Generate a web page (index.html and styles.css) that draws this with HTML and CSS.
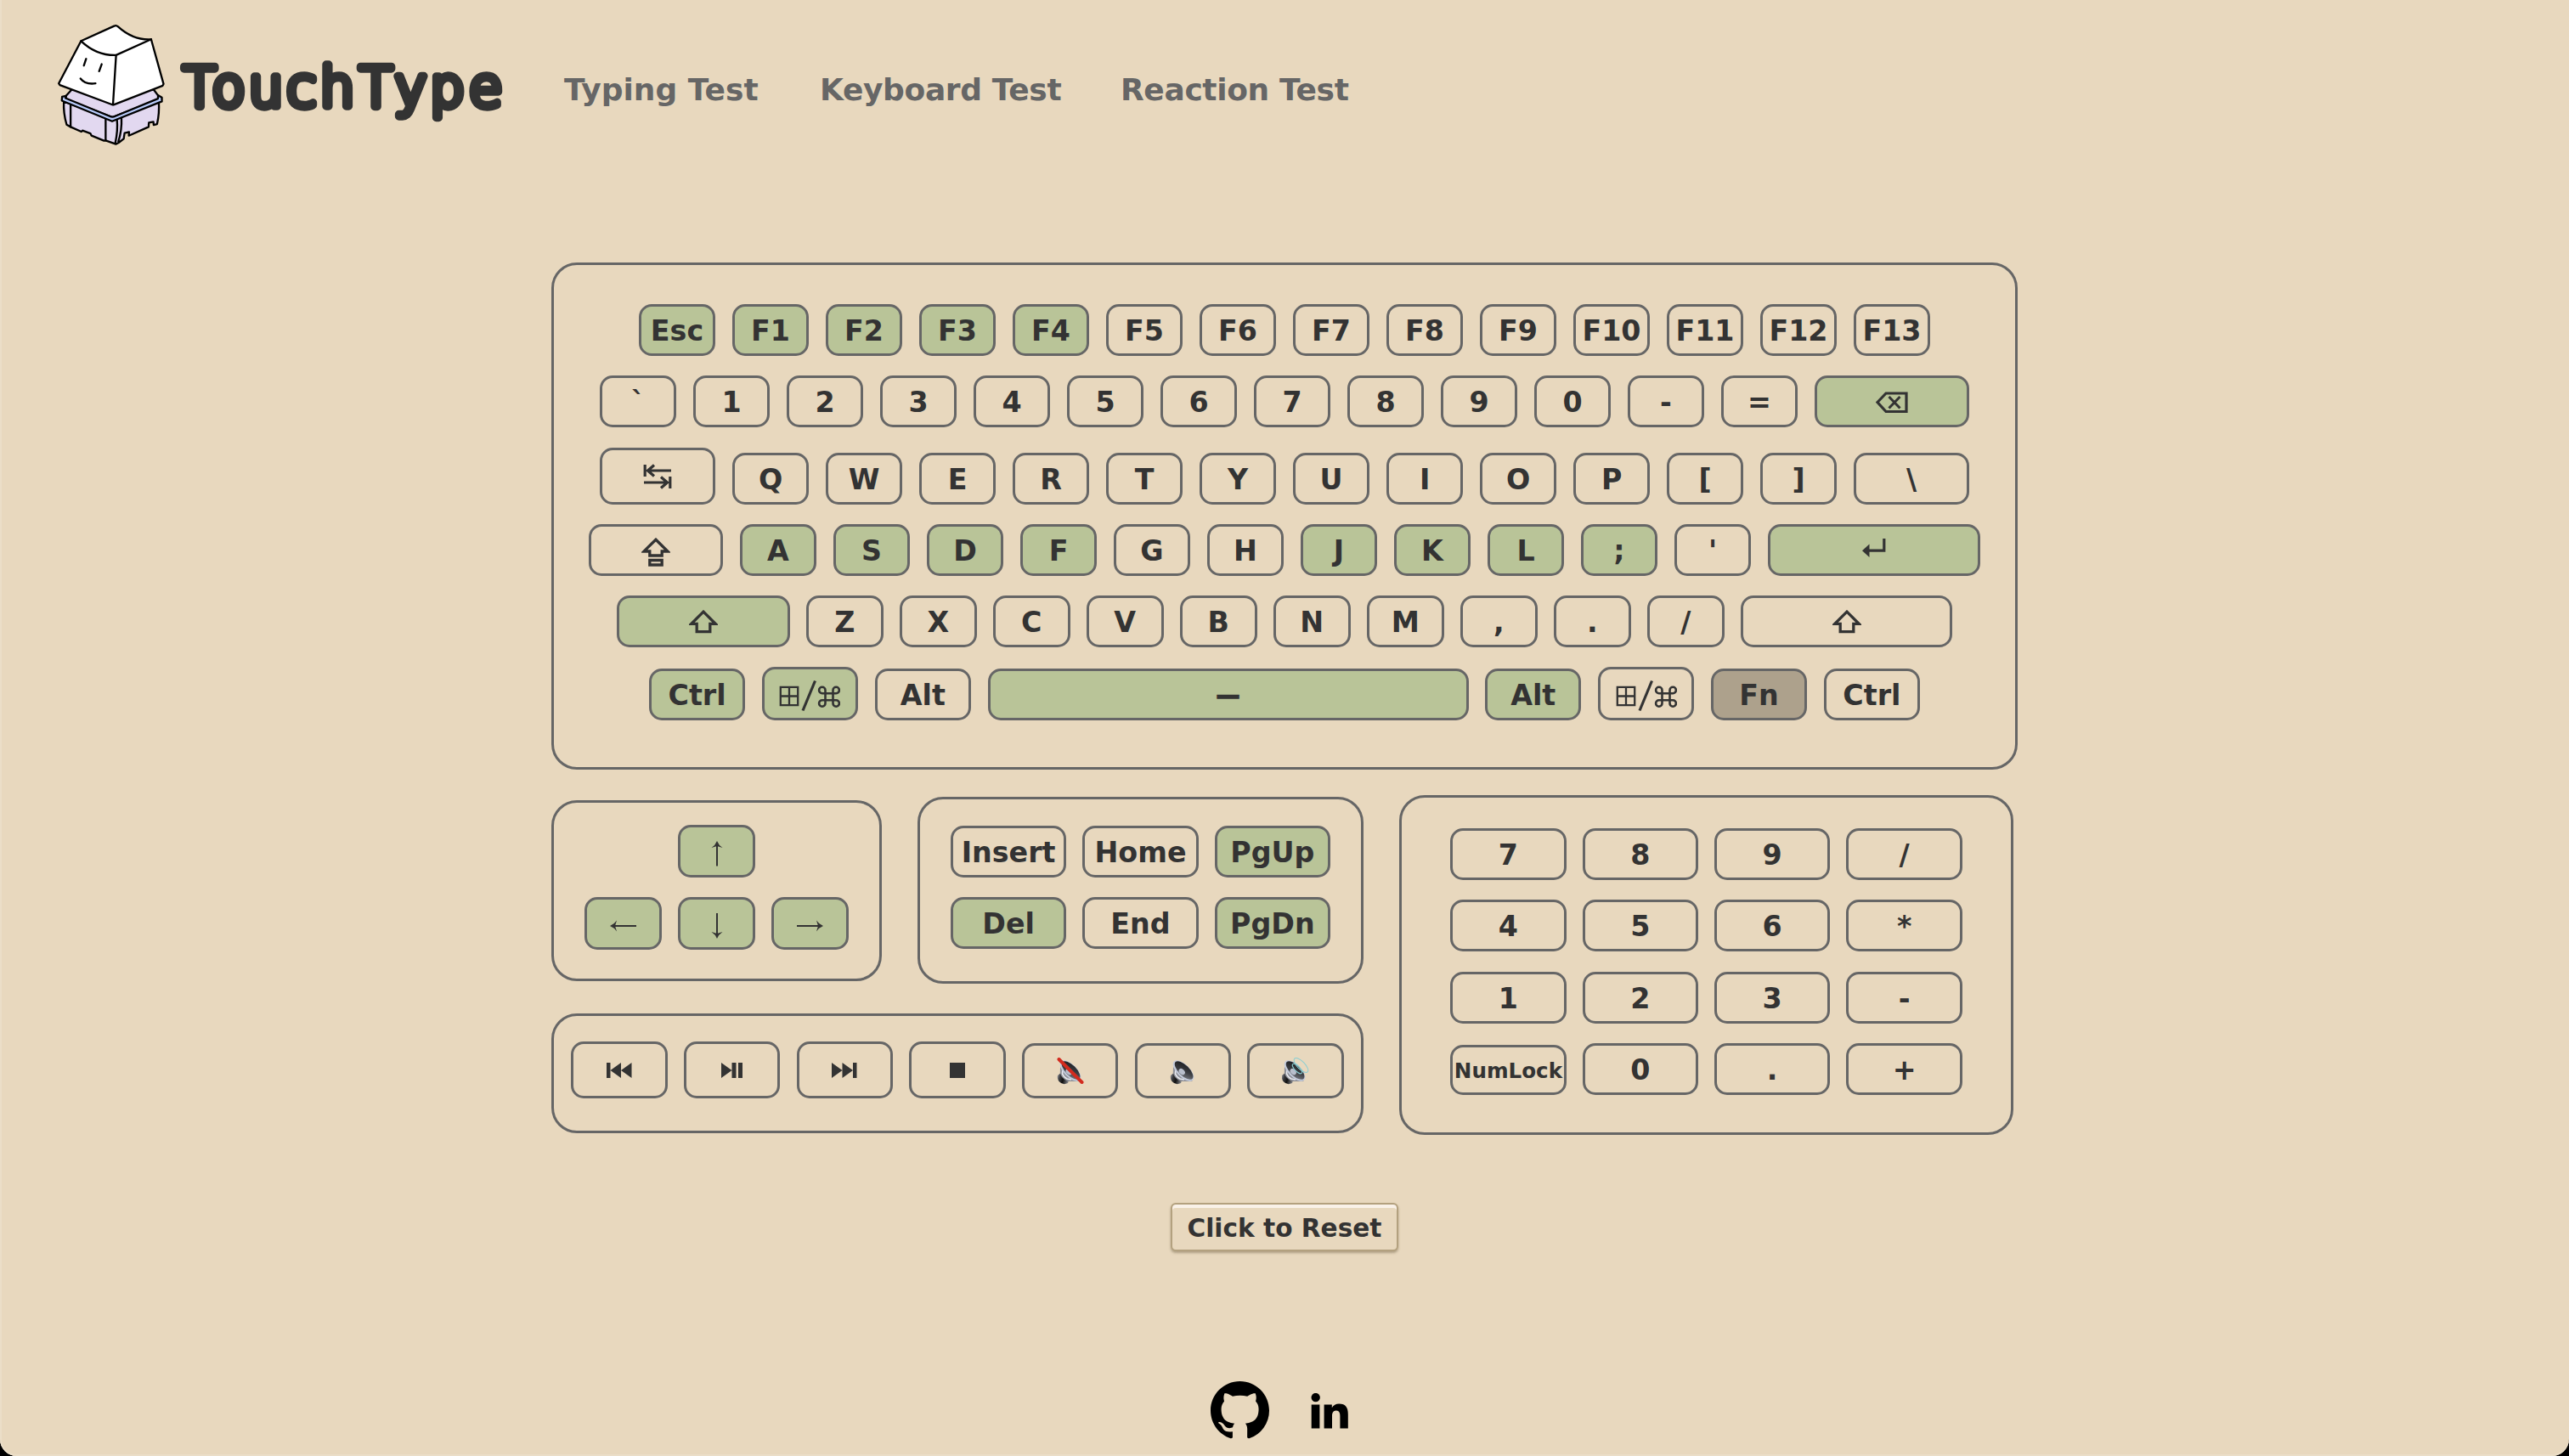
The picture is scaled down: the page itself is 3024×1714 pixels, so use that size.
FILE: index.html
```
<!DOCTYPE html>
<html lang="en">
<head>
<meta charset="utf-8">
<title>TouchType - Keyboard Test</title>
<link rel="stylesheet" href="styles.css">
</head>
<body>
<svg class="defs" width="0" height="0" aria-hidden="true">
  <defs>
    <linearGradient id="cone" x1="0" y1="0" x2="1" y2="1">
      <stop offset="0" stop-color="#17181b"/><stop offset=".55" stop-color="#3b3d42"/><stop offset="1" stop-color="#84868c"/>
    </linearGradient>
    <linearGradient id="magnet" x1="0" y1="0" x2="1" y2=".3">
      <stop offset="0" stop-color="#b9bac0"/><stop offset=".3" stop-color="#3a3b3f"/><stop offset=".6" stop-color="#111"/><stop offset="1" stop-color="#77797e"/>
    </linearGradient>
    <symbol id="shift" viewBox="0 0 34 28">
      <path d="M17 2.2 L31.2 16.3 H24.8 V25.6 H9.2 V16.3 H2.8 Z" fill="none" stroke="currentColor" stroke-width="3.3"/>
    </symbol>
    <symbol id="wincmd" viewBox="0 0 72 38">
      <path d="M1.8 8.8 H22.2 V30.2 H1.8 Z M12 8.8 V30.2 M1.8 19.5 H22.2" fill="none" stroke="currentColor" stroke-width="2.3"/>
      <path d="M28 36.5 L42.5 1.5" stroke="currentColor" stroke-width="3.2"/>
      <path d="M54.5 16 V12.5 A3.7 3.7 0 1 0 50.8 16.2 H67.2 A3.7 3.7 0 1 0 63.5 12.5 V28 A3.7 3.7 0 1 0 67.2 24.3 H50.8 A3.7 3.7 0 1 0 54.5 28 Z" fill="none" stroke="currentColor" stroke-width="2.6"/>
    </symbol>
    <symbol id="speaker" viewBox="0 0 30 30">
      <path d="M1 19 L6.5 14.5 L15 22 L13 28 Q7 31 2.5 26 Q0 22 1 19Z" fill="url(#magnet)"/>
      <path d="M4 9 L3.8 16 Q6 24 14 26 L27 26 Z" fill="#8d8f96"/>
      <path d="M7 12 L6.5 17 Q8 21 12 23 L17 24" fill="none" stroke="#e8e9ee" stroke-width="1.6"/>
      <ellipse cx="16" cy="13.5" rx="15.6" ry="7.6" transform="rotate(45 16 13.5)" fill="#c4cbdb"/>
      <ellipse cx="16.6" cy="13" rx="14" ry="6.2" transform="rotate(45 16.6 13)" fill="url(#cone)"/>
      <ellipse cx="14.2" cy="14.6" rx="4.2" ry="3" transform="rotate(45 14.2 14.6)" fill="#b9bfcc"/>
    </symbol>
  </defs>
</svg>
<header class="header">
  <a class="brand">
    <svg class="mascot" viewBox="50 20 384 436" fill="none" stroke="#000" stroke-width="7" stroke-linejoin="round" stroke-linecap="round">
      <path d="M74 298 Q72 340 84 380 L98 388 L136 405 L140 401 L168 411 L172 419 L216 437 L222 436 L258 449 L268 444 L286 430 L289 410 L305 406 L304 419 L374 388 L375 373 L391 370 L392 381 L404 378 Q413 340 410 298 L245 360 Z" fill="#e2d8f0"/>
      <path d="M98 308 V388 M222 360 V436 M262 362 Q266 400 256 446 M278 358 Q280 400 267 440" />
      <path d="M102 256 L82 278 L80 290 L246 354 L410 290 L407 276 L392 256 Z" fill="#e2d8f0" />
      <path d="M82 278 L68 281 L67 295 L245 368 L421 298 V284 L408 276 L407 288 L256 350 Q246 355 236 350 L80 286 Z" fill="#b9ccfb"/>
      <path d="M135 84 L252 31 Q259 27 266 33 Q320 82 383 78 L427 236 L424 242 L252 309 Q247 311 242 308 L60 240 L56 234 Z" fill="#fff"/>
      <path d="M135 84 Q190 136 259 134 L383 78 M259 134 L248 309"/>
      <path d="M153 147 L145 171 M208 166 L199 191 M133 217 Q150 239 186 234"/>
    </svg>
    <svg class="wordmark" viewBox="205 60 395 96" aria-label="TouchType">
      <text y="125.3" x="215.2 249.6 292.7 337.2 376.7 423 464.4 506.3 551.9">TouchType</text>
    </svg>
  </a>
  <nav class="nav">
    <a class="nav-link typing">Typing Test</a>
    <a class="nav-link keyboard-link">Keyboard Test</a>
    <a class="nav-link reaction">Reaction Test</a>
  </nav>
</header>

<main class="main">
  <section class="panel board">
    <div class="row">
      <div class="key on">Esc</div><div class="key on">F1</div><div class="key on">F2</div><div class="key on">F3</div><div class="key on">F4</div><div class="key">F5</div><div class="key">F6</div><div class="key">F7</div><div class="key">F8</div><div class="key">F9</div><div class="key">F10</div><div class="key">F11</div><div class="key">F12</div><div class="key">F13</div>
    </div>
    <div class="row">
      <div class="key">`</div><div class="key">1</div><div class="key">2</div><div class="key">3</div><div class="key">4</div><div class="key">5</div><div class="key">6</div><div class="key">7</div><div class="key">8</div><div class="key">9</div><div class="key">0</div><div class="key">-</div><div class="key">=</div>
      <div class="key backspace on"><svg width="38" height="26" viewBox="0 0 38 26" fill="none" stroke="currentColor"><path d="M2 12.5 L12 2 H36 V23.5 H12 Z" stroke-width="3.2"/><path d="M15.5 6 L28.5 19.5 M28.5 6 L15.5 19.5" stroke-width="3"/></svg></div>
    </div>
    <div class="row">
      <div class="key tab"><svg width="34" height="30" viewBox="0 0 34 30" fill="none" stroke="currentColor" stroke-width="3.2"><path d="M2.2 1 V15 M33 8 H5 M13 1.5 L5.5 8 L13 14.5 M31.8 15 V29 M1 22 H29 M21 15.5 L28.5 22 L21 28.5"/></svg></div>
      <div class="key">Q</div><div class="key">W</div><div class="key">E</div><div class="key">R</div><div class="key">T</div><div class="key">Y</div><div class="key">U</div><div class="key">I</div><div class="key">O</div><div class="key">P</div><div class="key">[</div><div class="key">]</div>
      <div class="key wide">\</div>
    </div>
    <div class="row">
      <div class="key caps"><svg width="34" height="34" viewBox="0 0 34 34" fill="none" stroke="currentColor" stroke-width="3.3"><path d="M17 2.2 L31 16 H24.2 V21 H9.8 V16 H3 Z"/><path d="M9.8 26.5 H24.2 V32 H9.8 Z"/></svg></div>
      <div class="key on">A</div><div class="key on">S</div><div class="key on">D</div><div class="key on">F</div><div class="key">G</div><div class="key">H</div><div class="key on">J</div><div class="key on">K</div><div class="key on">L</div><div class="key on">;</div><div class="key">'</div>
      <div class="key enter on"><svg width="28" height="22" viewBox="0 0 28 22"><path d="M25.8 0 V14.2 H7" fill="none" stroke="currentColor" stroke-width="3.2"/><path d="M0 14.2 L8.5 6.5 V22 Z" fill="currentColor"/></svg></div>
    </div>
    <div class="row">
      <div class="key shift-left on"><svg width="34" height="28"><use href="#shift"/></svg></div>
      <div class="key">Z</div><div class="key">X</div><div class="key">C</div><div class="key">V</div><div class="key">B</div><div class="key">N</div><div class="key">M</div><div class="key">,</div><div class="key">.</div><div class="key">/</div>
      <div class="key shift-right"><svg width="34" height="28"><use href="#shift"/></svg></div>
    </div>
    <div class="row">
      <div class="key mod on">Ctrl</div>
      <div class="key mod meta on"><svg width="72" height="38"><use href="#wincmd"/></svg></div>
      <div class="key mod">Alt</div>
      <div class="key space on">—</div>
      <div class="key mod on">Alt</div>
      <div class="key mod meta"><svg width="72" height="38"><use href="#wincmd"/></svg></div>
      <div class="key mod off">Fn</div>
      <div class="key mod">Ctrl</div>
    </div>
  </section>

  <div class="lower">
    <div class="left">
      <div class="pair">
        <section class="panel arrows">
          <div class="row"><div class="key on"><svg width="14" height="30" viewBox="0 0 14 30"><path d="M7 4 V29.5" stroke="currentColor" stroke-width="2"/><path d="M7 0 Q9 5 13.5 8 L7 6 L0.5 8 Q5 5 7 0Z" fill="currentColor"/></svg></div></div>
          <div class="row">
            <div class="key on"><svg width="31" height="14" viewBox="0 0 31 14"><path d="M4 7 H31" stroke="currentColor" stroke-width="2"/><path d="M0 7 Q5 5 8 .5 L6 7 L8 13.5 Q5 9 0 7Z" fill="currentColor"/></svg></div>
            <div class="key on"><svg width="14" height="30" viewBox="0 0 14 30"><path d="M7 0 V26" stroke="currentColor" stroke-width="2"/><path d="M7 30 Q9 25 13.5 22 L7 24 L0.5 22 Q5 25 7 30Z" fill="currentColor"/></svg></div>
            <div class="key on"><svg width="31" height="14" viewBox="0 0 31 14"><path d="M0 7 H27" stroke="currentColor" stroke-width="2"/><path d="M31 7 Q26 5 23 .5 L25 7 L23 13.5 Q26 9 31 7Z" fill="currentColor"/></svg></div>
          </div>
        </section>
        <section class="panel navkeys">
          <div class="row"><div class="key wide">Insert</div><div class="key wide">Home</div><div class="key wide on">PgUp</div></div>
          <div class="row"><div class="key wide on">Del</div><div class="key wide">End</div><div class="key wide on">PgDn</div></div>
        </section>
      </div>
      <section class="panel media">
        <div class="row">
          <div class="key mod tall"><svg width="30" height="18" viewBox="0 0 30 18" fill="currentColor"><path d="M0 0 H4.5 V18 H0Z M17 0 V18 L4.5 9Z M29.5 0 V18 L17 9Z"/></svg></div>
          <div class="key mod tall"><svg width="26" height="18" viewBox="0 0 26 18" fill="currentColor"><path d="M0 0 L12.5 9 L0 18Z M12.5 0 H17.5 V18 H12.5Z M20 0 H25 V18 H20Z"/></svg></div>
          <div class="key mod tall"><svg width="30" height="18" viewBox="0 0 30 18" fill="currentColor"><path d="M0 0 L12.5 9 L0 18Z M12.5 0 L25 9 L12.5 18Z M25 0 H29.5 V18 H25Z"/></svg></div>
          <div class="key mod tall"><svg width="18" height="18" viewBox="0 0 18 18"><path d="M0 0 H18 V18 H0Z" fill="currentColor"/></svg></div>
          <div class="key mod vol"><svg width="32" height="32" viewBox="0 -3 32 32"><use href="#speaker" width="30" height="30" y="-1"/><path d="M2.5 -1 L29.5 26" stroke="#d22b1f" stroke-width="4" stroke-linecap="round"/></svg></div>
          <div class="key mod vol"><svg width="32" height="32" viewBox="-1 -3 32 32"><use href="#speaker" width="30" height="30" y="-1"/></svg></div>
          <div class="key mod vol"><svg width="32" height="32" viewBox="1 -3 32 32"><use href="#speaker" width="30" height="30" y="-1"/><g fill="none" stroke="#8ccfd3" stroke-width="1"><ellipse cx="23.5" cy="6" rx="11" ry="4.5" transform="rotate(46 23.5 6)"/><ellipse cx="19" cy="10" rx="7.5" ry="3" transform="rotate(46 19 10)"/></g></svg></div>
        </div>
      </section>
    </div>
    <section class="panel numpad">
      <div class="row"><div class="key wide">7</div><div class="key wide">8</div><div class="key wide">9</div><div class="key wide">/</div></div>
      <div class="row"><div class="key wide">4</div><div class="key wide">5</div><div class="key wide">6</div><div class="key wide">*</div></div>
      <div class="row"><div class="key wide">1</div><div class="key wide">2</div><div class="key wide">3</div><div class="key wide">-</div></div>
      <div class="row"><div class="key wide numlock">NumLock</div><div class="key wide">0</div><div class="key wide">.</div><div class="key wide">+</div></div>
    </section>
  </div>
  <button class="reset">Click to Reset</button>
</main>

<footer class="footer">
  <svg width="69" height="69" viewBox="0 0 16 16"><path d="M8 0C3.58 0 0 3.58 0 8c0 3.54 2.29 6.53 5.47 7.59.4.07.55-.17.55-.38 0-.19-.01-.82-.01-1.49-2.01.37-2.53-.49-2.69-.94-.09-.23-.48-.94-.82-1.13-.28-.15-.68-.52-.01-.53.63-.01 1.08.58 1.23.82.72 1.21 1.87.87 2.33.66.07-.52.28-.87.51-1.07-1.78-.2-3.64-.89-3.64-3.95 0-.87.31-1.59.82-2.15-.08-.2-.36-1.02.08-2.12 0 0 .67-.21 2.2.82.64-.18 1.32-.27 2-.27s1.36.09 2 .27c1.53-1.04 2.2-.82 2.2-.82.44 1.1.16 1.92.08 2.12.51.56.82 1.27.82 2.15 0 3.07-1.87 3.75-3.65 3.95.29.25.54.73.54 1.48 0 1.07-.01 1.93-.01 2.2 0 .21.15.46.55.38A8.01 8.01 0 0 0 16 8c0-4.42-3.58-8-8-8z"/></svg>
  <svg width="44" height="42" viewBox="0 0 44 42"><circle cx="5.7" cy="5.1" r="5.2"/><path d="M.7 13.6 H10.4 V41.5 H.7Z M15.6 13.6 H24.8 V17.2 C26.5 14.4 29.5 12.6 33.2 12.6 C41 12.6 43.8 17 43.8 25 V41.5 H34.4 V27 C34.4 23.5 33.6 20.4 29.8 20.4 C26 20.4 25 23.4 25 27 V41.5 H15.6Z"/></svg>
</footer>
</body>
</html>
```
FILE: styles.css
```
* { box-sizing: border-box; }
html { background: #000; }
body {
  margin: 0;
  width: 3024px;
  height: 1714px;
  overflow: hidden;
  display: flex;
  flex-direction: column;
  background: #e8d8be;
  color: #333;
  border-radius: 0 0 20px 20px;
  box-shadow: inset 2px 0 #ebdec8, inset 0 -2px #ebdec8;
  font-family: Verdana, "DejaVu Sans", sans-serif;
  font-weight: bold;
}
.defs { position: absolute; }
svg { display: block; flex: none; }

.header {
  height: 180px;
  flex: none;
  display: flex;
  align-items: flex-start;
  padding: 27px 0 0 67px;
}
.brand { display: flex; }
.mascot { width: 128px; height: 145px; }
.wordmark { width: 395px; height: 96px; margin: 33px 0 0 10px; }
.wordmark text {
  font-family: "DejaVu Sans Light", "DejaVu Sans", sans-serif;
  font-weight: 200;
  font-size: 64px;
  fill: #333;
  stroke: #333;
  stroke-width: 9.4px;
  stroke-linejoin: round;
}
.nav {
  display: flex;
  margin: 58px 0 0 64px;
  font-size: 36px;
  line-height: 42px;
  color: #666;
  white-space: nowrap;
}
.typing { width: 301px; }
.keyboard-link { width: 354px; letter-spacing: -.35px; }
.reaction { letter-spacing: -.35px; }

.main {
  display: flex;
  flex-direction: column;
  align-items: center;
  padding-top: 129px;
}
.panel {
  border: 3px solid #666;
  border-radius: 30px;
  display: flex;
  flex-direction: column;
  align-items: center;
  gap: 23px;
}
.board { width: 1726px; height: 597px; padding-top: 46px; }
.row { display: flex; gap: 19.5px; align-items: flex-end; }

.key {
  width: 90.5px;
  height: 61px;
  border: 3px solid #666;
  border-radius: 15px;
  display: flex;
  align-items: center;
  justify-content: center;
  padding-top: 3px;
  font-size: 33.3px;
  line-height: 40px;
  white-space: nowrap;
}
.on { background: #b9c498; }
.off { background: #ada18c; }
.backspace { width: 182.5px; }
.wide { width: 136.3px; }
.tab { width: 136.5px; height: 67px; margin-top: 1px; padding-top: 0; }
.caps { width: 158.5px; padding-top: 5px; }
.enter { width: 250.5px; padding: 0 0 6px; }
.shift-left { width: 203.5px; padding: 0; }
.shift-right { width: 249px; padding: 0; }
.mod { width: 113.4px; }
.meta { height: 63px; padding-top: 5px; }
.space { width: 566px; font-size: 28px; -webkit-text-stroke: 1.4px #333; }

.lower { display: flex; gap: 42px; margin: 30px 5px 0 0; align-self: center; width: 1721px; }
.left { display: flex; flex-direction: column; padding-top: 2px; gap: 35px; }
.pair { display: flex; gap: 42px; align-items: center; }
.arrows { width: 389px; height: 213px; padding-top: 26px; }
.arrows .key { height: 62px; padding-top: 7px; }
.navkeys { width: 525px; height: 220px; padding-top: 31px; }
.navkeys .row, .numpad .row { gap: 19.1px; }
.media { width: 956px; height: 141px; padding-top: 30px; }
.media .row { gap: 19.3px; }
.tall { height: 67px; padding: 0; }
.vol { height: 65px; padding: 0; }
.numpad { width: 723px; height: 400px; padding-top: 36px; gap: 23.4px; }
.numlock { height: 59px; font-size: 24.6px; padding-top: 2px; }

.reset {
  margin-top: 80px;
  width: 268px;
  height: 57px;
  border: 2px solid #b3a17f;
  border-radius: 6px;
  background: #e8d8be;
  box-shadow: inset 0 4px #f9f1e8, 0 2px 3px rgba(90, 75, 45, .4);
  font: bold 29.6px/36px Verdana, "DejaVu Sans", sans-serif;
  color: #333;
  padding: 3px 0 0;
  white-space: nowrap;
}
.footer {
  display: flex;
  justify-content: center;
  align-items: center;
  gap: 49px;
  margin: 153px 13px 0 0;
}
```
